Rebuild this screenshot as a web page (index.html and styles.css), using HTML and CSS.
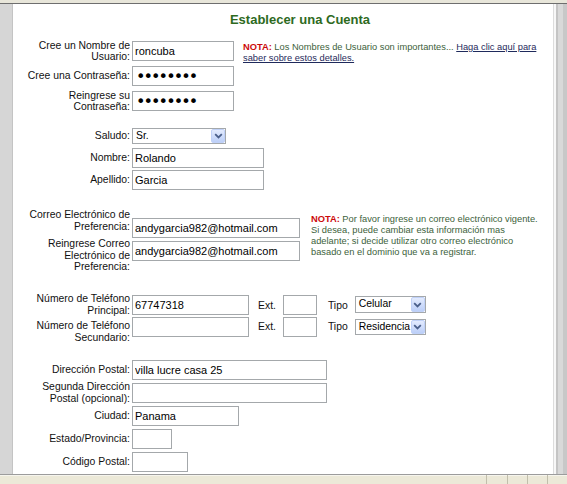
FILE: index.html
```html
<!DOCTYPE html>
<html lang="es">
<head>
<meta charset="utf-8">
<title>Establecer una Cuenta</title>
<link rel="stylesheet" href="styles.css">
</head>
<body>
<div class="window">
  <div class="topbar"></div>
  <div class="middle">
    <div class="leftpane"></div>
    <main class="content">
      <h1 class="title">Establecer una Cuenta</h1>

      <section class="section s1">
        <div class="rows">
          <div class="row">
            <label class="lbl">Cree un Nombre de Usuario:</label>
            <input class="field w102" type="text" value="roncuba">
          </div>
          <div class="row">
            <label class="lbl">Cree una Contraseña:</label>
            <input class="field w102 pass" type="password" value="12345678">
          </div>
          <div class="row">
            <label class="lbl">Reingrese su Contraseña:</label>
            <input class="field w102 pass" type="password" value="12345678">
          </div>
        </div>
        <p class="nota nota1"><b class="nota-tag">NOTA:</b> Los Nombres de Usuario son importantes... <a href="#" class="nota-link">Haga clic aquí para<br>saber sobre estos detalles.</a></p>
      </section>

      <section class="section s2">
        <div class="rows">
          <div class="row">
            <label class="lbl">Saludo:</label>
            <div class="select w94 h16"><span class="sel-text">Sr.</span><span class="sel-btn"><svg width="9" height="6" viewBox="0 0 9 6"><path d="M1.2 1.2L4.5 4.4L7.8 1.2" fill="none" stroke="#4a5f8a" stroke-width="1.8"/></svg></span></div>
          </div>
          <div class="row">
            <label class="lbl">Nombre:</label>
            <input class="field w132" type="text" value="Rolando">
          </div>
          <div class="row">
            <label class="lbl">Apellido:</label>
            <input class="field w132" type="text" value="Garcia">
          </div>
        </div>
      </section>

      <section class="section s3">
        <div class="rows">
          <div class="row row-c1">
            <label class="lbl">Correo Electrónico de Preferencia:</label>
            <input class="field w168" type="text" value="andygarcia982@hotmail.com">
          </div>
          <div class="row row-c2">
            <label class="lbl">Reingrese Correo Electrónico de Preferencia:</label>
            <input class="field w168" type="text" value="andygarcia982@hotmail.com">
          </div>
        </div>
        <p class="nota nota2"><b class="nota-tag">NOTA:</b> Por favor ingrese un correo electrónico vigente.<br>Si desea, puede cambiar esta información mas<br>adelante; si decide utilizar otro correo electrónico<br>basado en el dominio que va a registrar.</p>
      </section>

      <section class="section s4">
        <div class="rows">
          <div class="row row-t1">
            <label class="lbl">Número de Teléfono Principal:</label>
            <input class="field w117" type="text" value="67747318">
            <span class="inl ext">Ext.</span>
            <input class="field w34 extf" type="text" value="">
            <span class="inl tipo">Tipo</span>
            <div class="select w71 h17 tsel"><span class="sel-text">Celular</span><span class="sel-btn"><svg width="9" height="6" viewBox="0 0 9 6"><path d="M1.2 1.2L4.5 4.4L7.8 1.2" fill="none" stroke="#4a5f8a" stroke-width="1.8"/></svg></span></div>
          </div>
          <div class="row row-t2">
            <label class="lbl">Número de Teléfono Secundario:</label>
            <input class="field w117" type="text" value="">
            <span class="inl ext">Ext.</span>
            <input class="field w34 extf" type="text" value="">
            <span class="inl tipo">Tipo</span>
            <div class="select w71 h16 tsel"><span class="sel-text">Residencia</span><span class="sel-btn"><svg width="9" height="6" viewBox="0 0 9 6"><path d="M1.2 1.2L4.5 4.4L7.8 1.2" fill="none" stroke="#4a5f8a" stroke-width="1.8"/></svg></span></div>
          </div>
        </div>
      </section>

      <section class="section s5">
        <div class="rows">
          <div class="row">
            <label class="lbl">Dirección Postal:</label>
            <input class="field w195" type="text" value="villa lucre casa 25">
          </div>
          <div class="row">
            <label class="lbl">Segunda Dirección Postal (opcional):</label>
            <input class="field w195" type="text" value="">
          </div>
          <div class="row">
            <label class="lbl">Ciudad:</label>
            <input class="field w107" type="text" value="Panama">
          </div>
          <div class="row">
            <label class="lbl">Estado/Provincia:</label>
            <input class="field w40" type="text" value="">
          </div>
          <div class="row">
            <label class="lbl">Código Postal:</label>
            <input class="field w56" type="text" value="">
          </div>
        </div>
      </section>
    </main>
    <div class="rightpane"></div>
  </div>
  <div class="statusbar">
    <span class="panel p21"></span>
    <span class="panel p20"></span>
    <span class="panel p20"></span>
    <span class="panel p20"></span>
  </div>
</div>
</body>
</html>
```
FILE: styles.css
```css
* { box-sizing: border-box; }
html, body { margin: 0; padding: 0; background: #fff; }
body { font-family: "Liberation Sans", Arial, sans-serif; color: #111; }

.window { width: 567px; height: 484px; display: flex; flex-direction: column; overflow: hidden; }
.topbar { flex: none; height: 4px; background: #e8e6da; border-bottom: 1px solid #6e6e6e; }
.middle { flex: 1; display: flex; min-height: 0; }
.leftpane { flex: none; width: 13px; background: #d6d6d6; border-right: 1px solid #c4c4c4; }
.content { flex: 1; min-width: 0; overflow: hidden; background: #fff; padding-left: 11px; }
.rightpane { flex: none; width: 14px; background: linear-gradient(to right, #dcdcdc 0 1px, #f7f7f7 1px 3px, #c4c4c4 3px 5px, #d9d9d9 5px 10px, #c8c8c8 10px); }
.statusbar { flex: none; height: 10px; background: #ece9d8; border-top: 1px solid #9c9c9c; box-shadow: inset 0 1px 0 #f6f5ee; display: flex; justify-content: flex-end; }
.panel { display: block; height: 100%; border-left: 1px solid #c2bfac; }
.p21 { width: 21px; }
.p20 { width: 20px; }

.title { margin: 0; padding: 8px 0 0 23px; font-size: 13px; line-height: 16px; font-weight: bold; color: #2e6a1e; text-align: center; }

.section { display: flex; align-items: flex-start; }
.rows { display: flex; flex-direction: column; flex: none; }
.row { display: flex; align-items: center; }

.lbl { flex: none; width: 106px; margin-right: 2px; text-align: right; font-size: 10.4px; line-height: 11.5px; color: #111; }

.field { flex: none; height: 20px; margin: 0; padding: 0 2px; border: 1px solid #a4a8ab; background: #fff; font-family: "Liberation Sans", Arial, sans-serif; font-size: 11px; color: #000; outline: none; border-radius: 0; }
.pass { font-family: "DejaVu Sans", sans-serif; font-size: 16px; letter-spacing: -1.9px; padding-left: 3px; }
.w34 { width: 34px; }
.w40 { width: 40px; }
.w56 { width: 56px; }
.w71 { width: 71px; }
.w94 { width: 94px; }
.w102 { width: 102px; }
.w107 { width: 107px; }
.w117 { width: 117px; }
.w132 { width: 132px; }
.w168 { width: 168px; }
.w195 { width: 195px; }

.select { flex: none; display: flex; align-items: stretch; border: 1px solid #a4a8ab; background: #fff; }
.h16 { height: 16px; }
.h17 { height: 17px; }
.sel-text { flex: 1; min-width: 0; padding-left: 3px; font-size: 10.4px; line-height: 14px; color: #000; white-space: nowrap; overflow: hidden; }
.sel-btn { flex: none; width: 14px; margin: 0; display: flex; align-items: center; justify-content: center; background: linear-gradient(#e3ebfe, #bccff8); border: 1px solid #c0d1f8; border-radius: 2px; }

.nota { flex: none; margin: 0; font-size: 9.3px; line-height: 11px; color: #3d5f3b; white-space: nowrap; }
.nota-tag { color: #cc0a0a; font-weight: bold; }
.nota-link { color: #1f2a5c; text-decoration: underline; }

/* section 1 */
.s1 { margin-top: 11px; }
.s1 .rows { gap: 1px; }
.s1 .row { height: 24px; }
.nota1 { margin-left: 9px; padding-top: 3px; }

/* section 2 */
.s2 { margin-top: 12px; }
.s2 .row { height: 22px; }

/* section 3 */
.s3 { margin-top: 18px; }
.row-c1 { height: 29px; align-items: flex-start; }
.row-c1 .lbl { line-height: 12px; }
.row-c1 .field { align-self: flex-end; }
.row-c2 { height: 36px; align-items: flex-start; }
.row-c2 .field { margin-top: 3px; }
.nota2 { margin-left: 11px; padding-top: 5px; }

/* section 4 */
.s4 { margin-top: 19px; }
.inl { flex: none; font-size: 10.4px; line-height: 11.5px; }
.ext { margin-left: 9px; }
.extf { margin-left: 7px; }
.tipo { margin-left: 11px; }
.tsel { margin-left: 7px; }
.row-t1 { height: 23px; }
.row-t1 .inl { padding-top: 3px; }
.row-t2 { height: 28px; align-items: flex-start; }
.row-t2 .lbl { margin-top: 4px; line-height: 12px; }
.row-t2 .field { margin-top: 1px; }
.row-t2 .inl { margin-top: 5px; }
.row-t2 .select { margin-top: 3px; }

/* section 5 */
.s5 { margin-top: 14px; }
.s5 .row { height: 23px; }
```
